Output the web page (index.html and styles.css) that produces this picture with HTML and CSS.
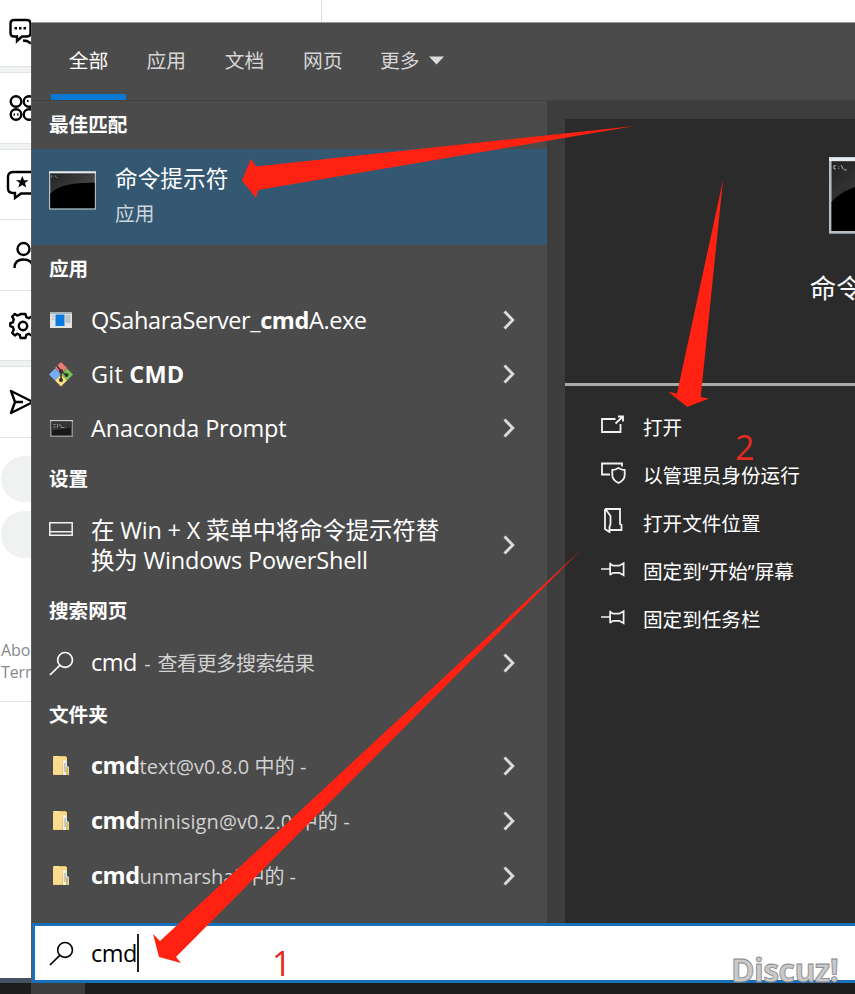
FILE: index.html
```html
<!DOCTYPE html>
<html lang="zh-CN">
<head>
<meta charset="utf-8">
<title>Search</title>
<link rel="stylesheet" href="styles.css">
</head>
<body>
<svg class="defs" width="0" height="0">
  <defs>
    <linearGradient id="gloss" x1="0" y1="0" x2="1" y2="1"><stop offset="0" stop-color="#222"/><stop offset="1" stop-color="#5a5a5a"/></linearGradient>
    <symbol id="chev" viewBox="0 0 12 20"><path d="M1.5 1.5 9.8 10 1.5 18.5" fill="none" stroke="#dadada" stroke-width="2.900"/></symbol>
    <symbol id="term" viewBox="0 0 48 39">
      <rect width="48" height="39" fill="#b4bcc4"/><rect width="48" height="2" fill="#e4ecf2"/>
      <rect x="1.3" y="2" width="45.4" height="35.6" fill="url(#gloss)"/>
      <path d="M1.3 23C8 14.500 22 11.500 46.700 11.500V37.600H1.300Z" fill="#000"/>
      <path d="M3.500 4.300h-1v1.600h1M5 4.600v.4M5 5.500v.4M6.200 4l1 2M7.500 6.400h1.500" stroke="#ccc" stroke-width=".45" fill="none"/>
    </symbol>
    <symbol id="mag" viewBox="0 0 26 26"><g fill="none" stroke="currentColor" stroke-width="1.700"><circle cx="16.700" cy="9.300" r="7.700"/><path d="M11.200 15 1 25"/></g></symbol>
    <symbol id="folder" viewBox="0 0 18 22">
      <path d="M1 1h13v19H1z" fill="#e8c266"/><path d="M2 1h5v18H3z" fill="#ffe49a"/><path d="M7 2h8v9H7z" fill="#f8d77f"/>
      <path d="M11 5h3l1 6 2 1v8h-6z" fill="#eef1ed"/><path d="M13 8v9" stroke="#8aa6a1" stroke-width="1"/><path d="M1 4l9-2v17l-4 1-5-1z" fill="#fbdc8c"/><path d="M14 12h2.500v8h-2.500z" fill="#dfb966"/>
    </symbol>
    <symbol id="pin" viewBox="0 0 26 16"><path d="M0 8h9.500M9.500 1.500v13M9.500 2.500l3 2h6.500l4.500-2.500v12.500l-4.500-2.500h-6.500l-3 2" fill="none" stroke="#f2f2f2" stroke-width="1.800"/></symbol>
  </defs>
</svg>
<div class="screen">
  <aside class="rail">
    <div class="nav n1"><svg width="31" height="32" viewBox="0 0 31 32"><g fill="none" stroke="#000" stroke-width="2.400"><path d="M14 4h13q3.500 0 3.500 3.500v10q0 3-3.500 3h-5l-5 4.500v-4.500h-3q-3.500 0-3.500-3.500V7.500Q10.500 4 14 4Z"/><path d="M23 24.500l4 .5 4 2.500"/></g><path d="M14.500 11h2.500v2.500h-2.500zM19 11h2.500v2.500H19zM23.500 11H26v2.500h-2.500z"/></svg></div>
    <div class="band"></div>
    <div class="nav n2"><svg width="31" height="28" viewBox="0 0 31 28"><g fill="none" stroke="#000" stroke-width="2.400"><circle cx="16" cy="7.500" r="5.300"/><circle cx="29" cy="7.500" r="5.300"/><circle cx="16" cy="20.500" r="5.300"/><circle cx="29" cy="20.500" r="5.300"/></g><path d="M27 6h1.500v2H27zM13.500 19.500H15v2h-1.500zM17 19.500h1.500v2H17z"/></svg></div>
    <div class="band"></div>
    <div class="nav n3"><svg width="31" height="30" viewBox="0 0 31 30"><path d="M31 2H13Q8 2 8 7v11q0 5 5 5h2v5l6-4.500h10" fill="none" stroke="#000" stroke-width="2.400"/><path d="M22.300 6l1.700 4.200h4.600l-3.700 2.900 1.400 4.500-4-2.700-4 2.700 1.400-4.500-3.700-2.900h4.600z"/></svg></div>
    <div class="nav n4"><svg width="31" height="28" viewBox="0 0 31 28"><g fill="none" stroke="#000" stroke-width="2.400"><circle cx="23.500" cy="8" r="6"/><path d="M14.500 27q0-8.500 9-8.500 7 0 8.500 5"/></g></svg></div>
    <div class="nav n5"><svg width="31" height="28" viewBox="0 0 31 28"><g fill="none" stroke="#000" stroke-width="2.400"><circle cx="23" cy="14" r="4.200"/><path stroke-linejoin="round" d="M20.500 2h5l.8 3.200 2.500 1 2.800-1.700 3 3-1.600 3v7l1.600 3-3 3-2.800-1.700-2.500 1-.8 3.200h-5l-.8-3.200-2.500-1-2.300 1.700-2.700-2.700 1.600-3-1-2.800-2.500-.8v-3l2.500-.8 1-2.800-1.600-3 2.700-2.700 2.300 1.700 2.500-1z"/></g></svg></div>
    <div class="band"></div>
    <div class="nav n6"><svg width="31" height="28" viewBox="0 0 31 28"><path d="M11 3l22 11-22 11 4-11zM15 14h8" fill="none" stroke="#000" stroke-width="2.400" stroke-linejoin="round"/></svg></div>
    <div class="pill"></div><div class="pill second"></div>
    <div class="links"><span>About</span><span>Terms</span></div>
    <div class="rest"></div>
    <div class="edge"></div>
  </aside>
  <main class="main">
    <div class="strip"><i></i></div>
    <section class="panel">
      <nav class="tabs">
        <span class="tab on">全部</span><span class="tab">应用</span><span class="tab">文档</span><span class="tab">网页</span><span class="tab">更多<svg width="15" height="9" viewBox="0 0 15 9"><path d="M0 .5h15L7.500 8.500z" fill="#ddd"/></svg></span>
      </nav>
      <div class="body">
        <div class="list">
          <h2>最佳匹配</h2>
          <div class="best"><svg width="47" height="39"><use href="#term" width="47" height="39"/></svg><div><b>命令提示符</b><span>应用</span></div></div>
          <h2>应用</h2>
          <div class="row"><span class="ic"><svg width="22" height="16" viewBox="0 0 22 16"><path d="M0 0h22v16H0z" fill="#e4e4e4"/><path d="M0 0h22v2H0z" fill="#a9b4ba"/><path d="M5.500 2.500h9V14h-9z" fill="#0a7add"/><path d="M15.500 3h5v8h-5z" fill="#bfc4c7"/><path d="M1.500 4h3M1.500 7h3" stroke="#aaa"/></svg></span><span class="t qs">QSaharaServer_<b>cmd</b>A.exe</span><svg class="ch"><use href="#chev"/></svg></div>
          <div class="row"><span class="ic"><svg width="24" height="25" viewBox="0 0 24 25"><path d="M12 0l6 6-6 6-6-6z" fill="#ed7c78"/><path d="M6 6.500l6 6-6 6-6-6z" fill="#76aef5"/><path d="M18 6.500l6 6-6 6-6-6z" fill="#78c353"/><path d="M12 12.500l6 6-6 6-6-6z" fill="#fbdf80"/><path d="M8 4l4 5v10M12 9l5 4" fill="none" stroke="#333" stroke-width="1.500"/><circle cx="12" cy="9" r="2" fill="#333"/><circle cx="17.500" cy="13" r="2" fill="#333"/><circle cx="12" cy="18" r="2" fill="#333"/></svg></span><span class="t git">Git <b>CMD</b></span><svg class="ch"><use href="#chev"/></svg></div>
          <div class="row"><span class="ic"><svg width="23" height="17" viewBox="0 0 23 17"><path d="M0 0h23v17H0z" fill="#8f9294"/><path d="M0 0h23v1.500H0z" fill="#c7cccf"/><path d="M1.500 1.500h20v14h-20z" fill="#181818"/><path d="M1.500 1.500h20v6l-20 3z" fill="#353535"/><path d="M3.500 4.500h2M3.500 7h2M7.500 4v3.500M9.500 4l2 3.500M11.500 7.500h3" stroke="#aaa" stroke-width=".8"/></svg></span><span class="t ana">Anaconda Prompt</span><svg class="ch"><use href="#chev"/></svg></div>
          <h2>设置</h2>
          <div class="row setting"><span class="ic"><svg width="24" height="14" viewBox="0 0 24 14"><path d="M.8.8h22.400v12.400H.8zM1 9.700h22" fill="none" stroke="#f2f2f2" stroke-width="1.500"/></svg></span><span class="t"><span class="l1">在 Win + X 菜单中将命令提示符替</span><br><span class="l2">换为 Windows PowerShell</span></span><svg class="ch"><use href="#chev"/></svg></div>
          <h2>搜索网页</h2>
          <div class="row web"><span class="ic"><svg width="25" height="25"><use href="#mag"/></svg></span><span class="t"><span class="cmd">cmd</span><small class="more"> - 查看更多搜索结果</small></span><svg class="ch"><use href="#chev"/></svg></div>
          <h2 class="last">文件夹</h2>
          <div class="row fold"><span class="ic"><svg width="18" height="22"><use href="#folder"/></svg></span><span class="t"><b>cmd</b><small>text@v0.8.0 中的 -</small></span><svg class="ch"><use href="#chev"/></svg></div>
          <div class="row fold"><span class="ic"><svg width="18" height="22"><use href="#folder"/></svg></span><span class="t"><b>cmd</b><small>minisign@v0.2.0 中的 -</small></span><svg class="ch"><use href="#chev"/></svg></div>
          <div class="row fold"><span class="ic"><svg width="18" height="22"><use href="#folder"/></svg></span><span class="t"><b>cmd</b><small class="un">unmarshal 中的 -</small></span><svg class="ch"><use href="#chev"/></svg></div>
        </div>
        <div class="detail">
          <div class="hero"><svg width="94" height="77"><use href="#term"/></svg><strong>命令提示符</strong></div>
          <div class="actions">
            <div><svg width="24" height="20" viewBox="0 0 24 20"><path d="M14.500 4H1v13h18.500V9M14.500 8.500 22 1.500M17 1.500h5v5" fill="none" stroke="#f2f2f2" stroke-width="1.800"/></svg>打开</div>
            <div><svg class="s" width="25" height="22" viewBox="0 0 25 22"><path d="M9 12.500H1V1.500h20V4.500M17.500 6q3 2 6.200 2v5q0 5-6.200 8-6.200-3-6.200-8V8q3.200 0 6.200-2z" fill="none" stroke="#f2f2f2" stroke-width="1.800"/></svg>以管理员身份运行</div>
            <div><svg class="f" width="19" height="25" viewBox="0 0 19 25"><path d="M1 1h15v15l1.500 1v5H6M1 1v20l4.500 3V19l1-3V8L1.500 1" fill="none" stroke="#f2f2f2" stroke-width="1.800"/></svg>打开文件位置</div>
            <div><svg class="p" width="25" height="16"><use href="#pin"/></svg>固定到“开始”屏幕</div>
            <div><svg class="p" width="25" height="16"><use href="#pin"/></svg>固定到任务栏</div>
          </div>
        </div>
      </div>
      <div class="search"><svg width="25" height="25"><use href="#mag"/></svg><span>cmd</span><i></i></div>
    </section>
  </main>
  <footer class="taskbar"><i></i></footer>
  <svg class="marks" width="855" height="994" viewBox="0 0 855 994">
    <g fill="#ff2212">
      <path d="M635 126 256 166.500 251 159 242 180.500 256 198 258 190z"/>
      <path d="M723 180 677 393.500 668.500 392 687.300 407 709 398.500 700.700 397z"/>
      <path d="M581 550 160 941 153 934 159 957 181 963 176 957z"/>
    </g>
  </svg>
  <span class="num one">1</span><span class="num two">2</span>
  <span class="logo">Discuz!</span>
</div>
</body>
</html>
```
FILE: styles.css
```css
* { box-sizing: border-box; }
body { margin: 0; background: #fff; font-family: "Open Sans", "Noto Sans CJK SC", sans-serif; }
svg { display: block; flex: none; }
.defs { position: absolute; }
.screen { position: relative; width: 855px; height: 994px; overflow: hidden; display: grid; grid-template: 983px 11px / 31px 824px; }
.rail { display: flex; flex-direction: column; overflow: hidden; background: #fff; }
.nav { flex: none; display: flex; align-items: center; }
.n1 { height: 66px; padding-bottom: 2px; }
.n2 { height: 70px; }
.n3 { height: 70px; border-bottom: 1px solid #e1e4e4; }
.n4 { height: 71px; border-bottom: 1px solid #e1e4e4; }
.n5 { height: 69px; }
.n6 { height: 71px; border-bottom: 1px solid #e1e4e4; }
.band { flex: none; height: 7px; background: #f0f2f2; border: solid #e0e4e4; border-width: 1px 0; }
.pill { flex: none; width: 150px; height: 46px; margin: 18px 0 0 1px; border-radius: 23px; background: #f0f2f2; }
.second { margin-top: 9px; height: 47px; }
.links { display: flex; flex-direction: column; margin-top: 81px; height: 63px; line-height: 22px; font-size: 16px; color: #858a8e; border-bottom: 1px solid #e1e4e4; padding-left: 1px; letter-spacing: -.1px; }
.rest { flex: 1; }
.edge { height: 5px; background: #435361; }
.strip { height: 23px; border-bottom: 1px solid #999; padding-left: 290px; }
.strip i { display: block; width: 1px; height: 22px; background: #ddd; }
.panel { height: 960px; display: flex; flex-direction: column; background: #3d3d3d; color: #fff; border-left: 1px solid #5a5a5a; }
.tabs { height: 78px; display: flex; background: #4b4b4b; border-bottom: 1px solid #414141; padding-left: 19px; gap: 3.300px; }
.tab { width: 75px; height: 77px; display: flex; align-items: center; justify-content: center; font-size: 19.800px; color: #d6d6d6; padding: 0 1px 5px 0; white-space: nowrap; }
.tab.on { color: #fff; border-bottom: 6px solid #0a79d4; padding: 1px 0 0; }
.tab:last-child { width: 97px; }
.tab svg { margin: 2px 0 0 10px; }
.body { height: 822px; display: flex; }
.list { width: 515px; height: 822px; background: #4b4b4b; flex: none; }
h2 { margin: 0; height: 48px; padding: 0 0 0 17px; font-size: 19.600px; line-height: 47px; font-weight: 700; }
h2:first-child { height: 48px; line-height: 48px; }
h2.last { height: 47px; }
.best { height: 96px; background: #345872; padding: 5px 0 8px 17px; display: flex; align-items: center; }
.best svg { margin-top: -10px; }
.best div { margin-left: 19px; display: flex; flex-direction: column; }
.best b { font-size: 22.700px; font-weight: 400; line-height: 36px; }
.best span { font-size: 19.700px; line-height: 33px; color: #ccd5dc; }
.row { height: 54px; display: flex; align-items: center; padding-left: 17px; font-size: 23.500px; white-space: nowrap; }
.ic { width: 24px; margin-right: 18px; display: flex; justify-content: center; flex: none; }
.t { width: 410px; line-height: 30px; letter-spacing: -.5px; }
.qs { letter-spacing: -.41px; }
.git { letter-spacing: .2px; }
.ana { letter-spacing: -.17px; }
.row b { font-weight: 700; }
.ch { width: 12px; height: 20px; margin-left: 2px; }
.setting { height: 84px; }
.setting .ic { margin-top: -32px; }
.l1, .l2 { letter-spacing: -.2px; }
.web, .fold { height: 56px; }
.fold { height: 55px; }
small { font-size: 20px; color: #d2d2d2; white-space: pre; letter-spacing: .1px; }
.more { letter-spacing: -.4px; word-spacing: 2.500px; }
.un { letter-spacing: -.05px; }
.detail { width: 290px; height: 804px; margin: 18px 0 0 18px; background: #2b2b2b; overflow: hidden; }
.hero { width: 622px; height: 267px; border-bottom: 3px solid #aaa; display: flex; flex-direction: column; align-items: center; padding-top: 38px; }
.hero strong { font-size: 26.500px; font-weight: 400; line-height: 40px; margin-top: 34px; }
.actions { padding: 16px 0 0 36px; }
.actions div { height: 48px; display: flex; align-items: center; font-size: 19.600px; white-space: nowrap; }
.actions svg { margin: 0 18px 3px 0; }
.actions svg.s { margin-right: 17px; }
.actions svg.f { margin: 0 20px 3px 3px; }
.actions svg.p { margin-right: 17px; }
.search { height: 60px; border: solid #1a70b8; border-width: 3px 0 3px 3px; background: #fff; color: #000; display: flex; align-items: center; padding-left: 14px; font-size: 23.500px; }
.search span { margin-left: 17px; letter-spacing: -.5px; }
.search i { width: 2px; height: 38px; background: #222; }
.taskbar { grid-column: 1 / 3; background: #1d1d1d; padding-left: 31px; }
.taskbar i { display: block; width: 54px; height: 11px; background: #3d3d3d; }
.marks { position: absolute; left: 0; top: 0; }
.num { position: absolute; font-size: 34px; line-height: 40px; color: #e22b20; }
.one { left: 272px; top: 943px; }
.two { left: 735px; top: 427px; }
.logo { position: absolute; left: 731px; top: 950px; font-size: 32px; line-height: 40px; font-weight: 700; color: #c9c9c9; -webkit-text-stroke: .8px #858585; letter-spacing: -.6px; }
```
